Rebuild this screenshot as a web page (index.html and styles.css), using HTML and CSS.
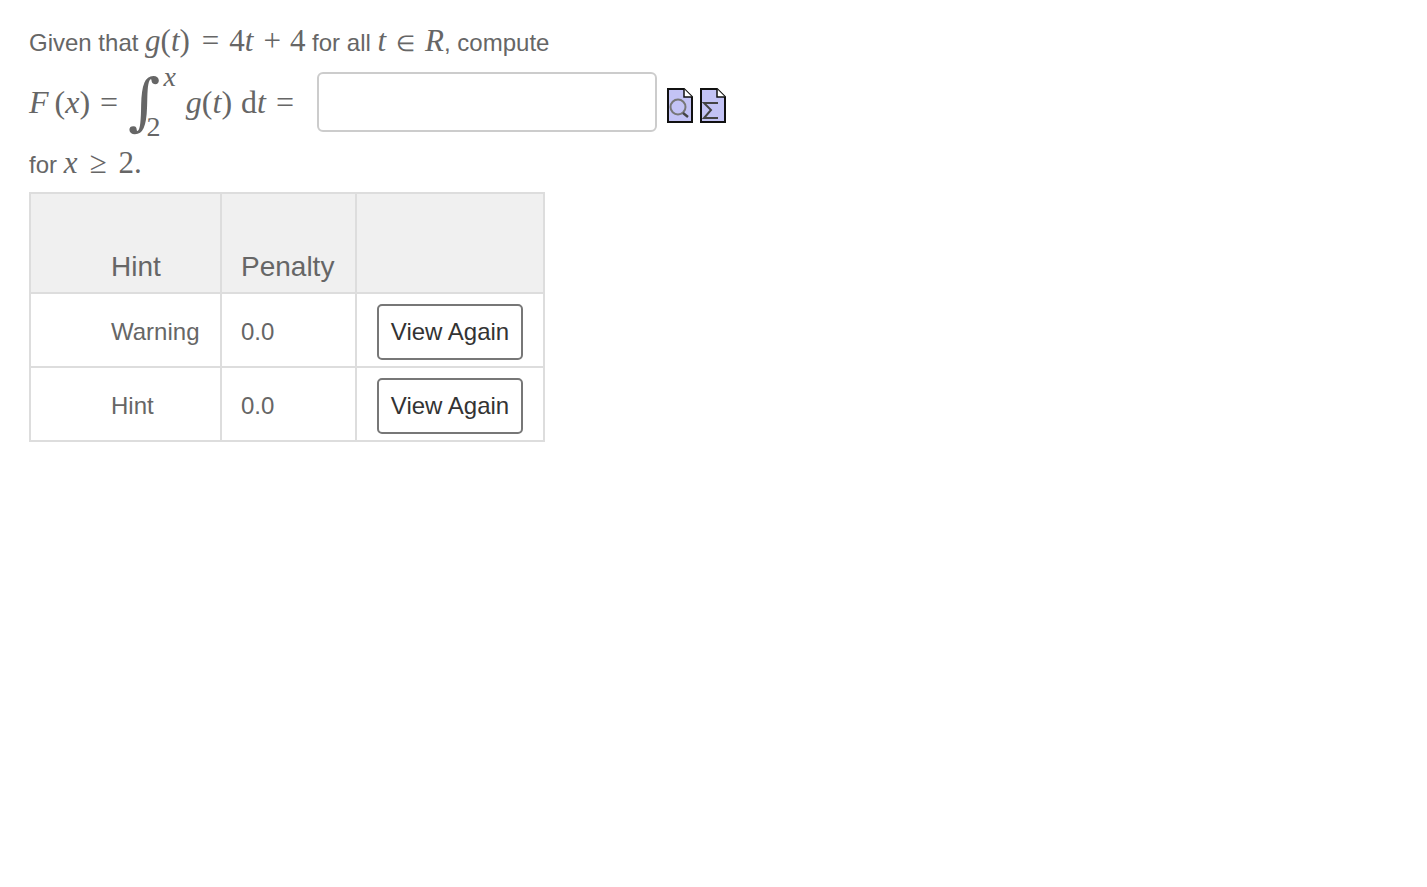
FILE: index.html
```html
<!DOCTYPE html>
<html lang="en">
<head>
    <meta charset="UTF-8">
    <meta name="viewport" content="width=device-width, initial-scale=1.0">
    <title>Question</title>
    <link rel="stylesheet" href="styles.css">
</head>
<body>

    <div class="question">
        <p class="line">Given that <span class="math"><i>g</i>(<i>t</i>)<span class="rel equals">=</span>4<i>t</i><span class="rel plus">+</span>4</span> for all <span class="math"><i>t</i><span class="rel member">∈</span><i>R</i></span>, compute</p>

        <div class="answer-row">
            <span class="math math-large"><i class="letter-f">F</i>(<i>x</i>)<span class="rel">=</span></span>
            <span class="integral">
                <span class="integral-sign">∫</span>
                <span class="limits">
                    <i class="limit-top">x</i>
                    <span class="limit-bottom">2</span>
                </span>
            </span>
            <span class="math math-large"><i>g</i>(<i>t</i>)<span class="differential">d<i>t</i></span><span class="rel">=</span></span>
            <input class="answer-input" type="text">
            <span class="tools">
                <svg class="tool-icon" viewBox="0 0 26 35">
                    <path d="M1 1H17L25 9V34H1Z" fill="#c3c3f5" stroke="#111" stroke-width="2"/>
                    <path d="M17 1V9H25" fill="#fff" stroke="#111" stroke-width="1.5"/>
                    <circle cx="11" cy="19" r="7.5" fill="none" stroke="#777" stroke-width="2"/>
                    <path d="M16 25L21 29" stroke="#444" stroke-width="2.5"/>
                </svg>
                <svg class="tool-icon" viewBox="0 0 26 35">
                    <path d="M1 1H17L25 9V34H1Z" fill="#c3c3f5" stroke="#111" stroke-width="2"/>
                    <path d="M17 1V9H25" fill="#fff" stroke="#111" stroke-width="1.5"/>
                    <path d="M18 15H4L11 22L4 30H18" fill="none" stroke="#444" stroke-width="2"/>
                </svg>
            </span>
        </div>

        <p class="line">for <span class="math"><i class="letter-x">x</i><span class="rel greater">≥</span>2.</span></p>
    </div>

    <table class="hints">
        <thead>
            <tr>
                <th class="hint-name">Hint</th>
                <th class="hint-penalty">Penalty</th>
                <th class="hint-action"></th>
            </tr>
        </thead>
        <tbody>
            <tr>
                <td class="hint-name">Warning</td>
                <td class="hint-penalty">0.0</td>
                <td class="hint-action"><button class="view-button">View Again</button></td>
            </tr>
            <tr>
                <td class="hint-name">Hint</td>
                <td class="hint-penalty">0.0</td>
                <td class="hint-action"><button class="view-button">View Again</button></td>
            </tr>
        </tbody>
    </table>

</body>
</html>
```

FILE: styles.css
```css
body {
    margin: 0;
    padding: 21px 29px;
    background-color: #fff;
    color: #666;
    font-family: "Liberation Sans", Arial, sans-serif;
    font-size: 24px;
}

.line {
    margin: 0;
    line-height: 40px;
}

.math {
    font-family: "Liberation Serif", "Times New Roman", serif;
    font-size: 31px;
    white-space: nowrap;
}

.math-large {
    font-size: 32px;
}

.rel {
    margin: 0 10px;
}

.equals {
    margin-left: 12px;
}

.plus {
    margin-right: 9px;
}

.member {
    font-size: 22px;
}

.greater {
    margin-right: 12px;
}

.letter-f {
    margin-right: 6px;
}

.letter-x {
    letter-spacing: 2px;
}

.differential {
    margin-left: 9px;
}

.answer-row {
    display: flex;
    align-items: center;
    height: 64px;
    margin: 6px 0 9px;
}

.answer-row .rel:last-child {
    margin-right: 0;
}

.integral {
    display: flex;
    align-items: center;
    margin: 0 10px 0 10px;
}

.integral-sign {
    font-family: "DejaVu Serif", serif;
    font-size: 62px;
    line-height: 64px;
}

.limits {
    display: flex;
    flex-direction: column;
    justify-content: space-between;
    height: 74px;
    font-family: "Liberation Serif", serif;
    font-size: 28px;
    line-height: 24px;
}

.limit-top {
    margin-left: 3px;
}

.limit-bottom {
    margin-left: -14px;
}

.answer-input {
    box-sizing: border-box;
    width: 340px;
    height: 60px;
    margin-left: 23px;
    border: 2px solid #ccc;
    border-radius: 6px;
    background-color: #fff;
}

.tools {
    display: flex;
    gap: 7px;
    margin: 7px 0 0 10px;
}

.tool-icon {
    width: 26px;
    height: 35px;
}

.hints {
    margin-top: 7px;
    border-collapse: collapse;
    border: 2px solid #ddd;
}

.hints th,
.hints td {
    border: 2px solid #ddd;
    padding: 0;
    text-align: left;
}

.hints th {
    height: 100px;
    padding-bottom: 9px;
    box-sizing: border-box;
    vertical-align: bottom;
    background-color: #f0f0f0;
    font-size: 28px;
    font-weight: normal;
}

.hints td {
    height: 74px;
    padding-top: 3px;
    box-sizing: border-box;
}

.hints .hint-name {
    width: 191px;
    padding-left: 80px;
    box-sizing: border-box;
}

.hints .hint-penalty {
    width: 135px;
    padding-left: 19px;
    box-sizing: border-box;
}

.hints .hint-action {
    width: 188px;
    padding-left: 20px;
    box-sizing: border-box;
}

.view-button {
    display: block;
    box-sizing: border-box;
    width: 146px;
    height: 56px;
    padding: 0;
    border: 2px solid #777;
    border-radius: 5px;
    background-color: #fff;
    color: #333;
    font-family: "Liberation Sans", Arial, sans-serif;
    font-size: 24px;
}
```
